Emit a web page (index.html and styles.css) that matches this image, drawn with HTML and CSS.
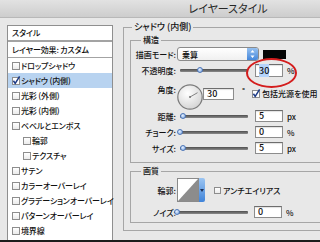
FILE: index.html
```html
<!DOCTYPE html>
<html lang="ja">
<head>
    <meta charset="UTF-8">
    <meta name="viewport" content="width=device-width, initial-scale=1.0">
    <title>レイヤースタイル</title>
    <link rel="stylesheet" href="styles.css">
</head>
<body>
    <div class="window">
        <div class="titlebar">レイヤースタイル</div>

        <div class="dialog">
            <!-- Effect list -->
            <div class="styles-list">
                <div class="list-head">スタイル</div>
                <div class="list-head">レイヤー効果: カスタム</div>
                <ul class="effects">
                    <li><span class="box"></span>ドロップシャドウ</li>
                    <li class="selected">
                        <svg class="box-checked" width="8" height="8" viewBox="0 0 8 8"><rect x=".5" y=".5" width="7" height="7" fill="#fff" stroke="#8d8d8d"/><path d="M1.4 3.8 L3.2 6.4 L7.6 -0.6" fill="none" stroke="#1d3b86" stroke-width="1.5"/></svg>シャドウ (内側)
                    </li>
                    <li><span class="box"></span>光彩 (外側)</li>
                    <li><span class="box"></span>光彩 (内側)</li>
                    <li><span class="box"></span>ベベルとエンボス</li>
                    <li class="sub"><span class="box"></span>輪郭</li>
                    <li class="sub"><span class="box"></span>テクスチャ</li>
                    <li><span class="box"></span>サテン</li>
                    <li><span class="box"></span>カラーオーバーレイ</li>
                    <li><span class="box"></span>グラデーションオーバーレイ</li>
                    <li><span class="box"></span>パターンオーバーレイ</li>
                    <li><span class="box"></span>境界線</li>
                </ul>
            </div>

            <!-- Settings -->
            <div class="settings">
                <fieldset class="group">
                    <legend>シャドウ (内側)</legend>

                    <fieldset class="group inner">
                        <legend>構造</legend>

                        <div class="row row-mode">
                            <span class="label">描画モード:</span>
                            <div class="select">
                                乗算
                                <span class="stepper">
                                    <svg width="11" height="14" viewBox="0 0 11 14"><path d="M5.5 3 L7.5 5.5 H3.5 Z M5.5 11 L7.5 8.5 H3.5 Z" fill="#fff"/></svg>
                                </span>
                            </div>
                            <div class="swatch"></div>
                        </div>

                        <div class="row row-opacity">
                            <span class="label">不透明度:</span>
                            <div class="slider"><span class="thumb" style="left: 30%"></span></div>
                            <div class="field marked"><span class="sel">30</span><span class="ring"></span></div>
                            <span class="unit">%</span>
                        </div>

                        <div class="row row-angle">
                            <span class="label">角度:</span>
                            <svg class="dial" width="26" height="26" viewBox="0 0 26 26">
                                <defs>
                                    <radialGradient id="dialFill" cx="40%" cy="35%" r="70%">
                                        <stop offset="0" stop-color="#ffffff"/>
                                        <stop offset="1" stop-color="#d2d2d2"/>
                                    </radialGradient>
                                </defs>
                                <circle cx="13" cy="13" r="12.2" fill="url(#dialFill)" stroke="#7c7c7c" stroke-width="1.2"/>
                                <line x1="13" y1="13" x2="20.5" y2="8.7" stroke="#666" stroke-width=".8"/>
                                <circle cx="13" cy="13" r=".9" fill="#666"/>
                            </svg>
                            <div class="field angle">30</div>
                            <span class="degree">°</span>
                            <svg class="box-checked global" width="8" height="8" viewBox="0 0 8 8"><rect x=".5" y=".5" width="7" height="7" fill="#fff" stroke="#8d8d8d"/><path d="M1.4 3.8 L3.2 6.4 L7.6 -0.6" fill="none" stroke="#1d3b86" stroke-width="1.5"/></svg>
                            <span class="check-text">包括光源を使用</span>
                        </div>

                        <div class="row row-small first">
                            <span class="label">距離:</span>
                            <div class="slider"><span class="thumb" style="left: 5%"></span></div>
                            <div class="field">5</div>
                            <span class="unit">px</span>
                        </div>

                        <div class="row row-small">
                            <span class="label">チョーク:</span>
                            <div class="slider"><span class="thumb" style="left: 0%"></span></div>
                            <div class="field">0</div>
                            <span class="unit">%</span>
                        </div>

                        <div class="row row-small">
                            <span class="label">サイズ:</span>
                            <div class="slider"><span class="thumb" style="left: 5%"></span></div>
                            <div class="field">5</div>
                            <span class="unit">px</span>
                        </div>
                    </fieldset>

                    <fieldset class="group inner quality">
                        <legend>画質</legend>

                        <div class="row row-contour">
                            <span class="label">輪郭:</span>
                            <div class="contour">
                                <svg width="22" height="24" viewBox="0 0 22 24"><rect x=".5" y=".5" width="21" height="23" fill="#fff" stroke="#8a8a8a"/><path d="M1 23 L21 1 V23 Z" fill="#8c8c8c"/></svg>
                                <span class="contour-step">
                                    <svg width="6" height="24" viewBox="0 0 6 24"><path d="M1 11 H5 L3 14 Z" fill="#1d2f55"/></svg>
                                </span>
                            </div>
                            <span class="box antialias"></span>
                            <span class="check-text">アンチエイリアス</span>
                        </div>

                        <div class="row row-small noise">
                            <span class="label">ノイズ:</span>
                            <div class="slider"><span class="thumb" style="left: 0%"></span></div>
                            <div class="field">0</div>
                            <span class="unit">%</span>
                        </div>
                    </fieldset>
                </fieldset>
            </div>
        </div>
    </div>
</body>
</html>
```

FILE: styles.css
```css
body {
    margin: 0;
    background: #1c1c1c;
    font-family: "Noto Sans CJK JP", "Noto Sans", sans-serif;
    font-size: 8px;
    font-weight: 500;
    font-feature-settings: "palt" 1;
    color: #111;
    overflow: hidden;
}

.window {
    width: 456px;
    height: 240px;
    background: #e8e8e8;
    overflow: hidden;
}

.titlebar {
    height: 17px;
    line-height: 16px;
    border-bottom: 1px solid #b8b8b8;
    background: linear-gradient(#e2e2e2, #cdcdcd);
    text-align: center;
    font-size: 11px;
    font-weight: 400;
    color: #262626;
}

.dialog {
    display: flex;
    gap: 10px;
    padding: 4px 0 0 7px;
}

/* left list */
.styles-list {
    flex: none;
    width: 104px;
    height: 230px;
    margin-top: 3px;
    border: 1px solid #8f8f8f;
    background: #fff;
    letter-spacing: -0.15px;
}

.list-head {
    height: 14px;
    line-height: 14px;
    padding-left: 4px;
    border-bottom: 2px solid #a3a3a3;
}

.list-head + .list-head {
    height: 15px;
    line-height: 15px;
    border-bottom: 1px solid #a3a3a3;
}

.effects {
    list-style: none;
    margin: 0;
    padding: 0;
}

.effects li {
    display: flex;
    align-items: center;
    height: 15px;
    padding-left: 4px;
    white-space: nowrap;
}

.effects li.sub {
    padding-left: 15px;
}

.effects li.selected {
    background: #b8d3f0;
}

.box {
    flex: none;
    width: 8px;
    height: 8px;
    box-sizing: border-box;
    border: 1px solid #8d8d8d;
    background: linear-gradient(#fff, #ebebeb);
    margin-right: 1px;
}

.box-checked {
    flex: none;
    overflow: visible;
    margin-right: 1px;
}

/* right settings */
.settings {
    flex: none;
    width: 330px;
}

.group {
    margin: 0;
    padding: 0 0 7px 6px;
    min-width: 0;
    border: 1px solid #a6a6a6;
}

.group legend {
    margin-left: 2px;
    padding: 0 2px;
    line-height: 10px;
    font-size: 9px;
}

.group.inner {
    margin-top: 3px;
    padding: 0 0 8px 0;
}

.group.inner legend {
    margin-left: 10px;
    font-size: 8px;
}

.group.quality {
    padding-bottom: 4px;
}

.row {
    display: flex;
    align-items: center;
    white-space: nowrap;
}

.row .label {
    flex: none;
    width: 45px;
    margin-right: 1px;
    text-align: right;
}

.row-mode {
    height: 14px;
    margin-top: 2px;
}

.select {
    display: flex;
    align-items: center;
    width: 82px;
    height: 14px;
    box-sizing: border-box;
    padding-left: 4px;
    border: 1px solid #8a8a8a;
    border-radius: 3px;
    background: linear-gradient(#fff, #f0f0f0);
    overflow: hidden;
}

.select .stepper {
    display: flex;
    margin-left: auto;
    width: 11px;
    height: 14px;
    margin-top: -1px;
    margin-bottom: -1px;
    background: linear-gradient(#9cc5f2, #3f83d9);
}

.swatch {
    width: 23px;
    height: 9px;
    margin-left: 4px;
    background: #050505;
}

.slider {
    position: relative;
    flex: none;
    width: 68px;
    height: 3px;
    margin: 0 7px 0 3px;
    border-radius: 1px;
    background: linear-gradient(#4e4e4e, #8a8a8a);
}

.thumb {
    position: absolute;
    top: -2px;
    width: 6px;
    height: 6px;
    margin-left: -3px;
    box-sizing: border-box;
    border: 1px solid #4b75b8;
    border-radius: 50%;
    background: radial-gradient(circle at 40% 35%, #e4efff, #7da6de);
}

.field {
    flex: none;
    width: 28px;
    height: 12px;
    box-sizing: border-box;
    padding-left: 3px;
    line-height: 10px;
    font-size: 9px;
    border: 1px solid #8c8c8c;
    border-top-color: #6d6d6d;
    background: #fff;
    box-shadow: inset 0 1px 1px rgba(0, 0, 0, 0.12);
}

.field .sel {
    background: #b5d4fb;
}

.field.marked {
    position: relative;
    height: 13px;
    line-height: 11px;
}

.ring {
    position: absolute;
    left: -10px;
    top: -7px;
    width: 51px;
    height: 30px;
    box-sizing: border-box;
    border: 2px solid #d41d1d;
    border-radius: 50%;
}

.unit {
    margin-left: 4px;
}

.row-opacity {
    height: 13px;
    margin-top: 3px;
}

.row-angle {
    align-items: flex-start;
    height: 26px;
    margin-top: 7px;
}

.dial {
    flex: none;
}

.field.angle {
    width: 31px;
    margin-top: 4px;
}

.degree {
    margin: 1px 0 0 8px;
}

.global {
    margin: 6px 2px 0 7px;
}

.row-angle .check-text {
    margin-top: 4px;
}

.row-small {
    height: 12px;
    margin-top: 4px;
}

.row-small.first {
    margin-top: 0;
}

.row-contour {
    height: 24px;
    margin-top: 2px;
}

.contour {
    display: flex;
    flex: none;
}

.contour-step {
    display: flex;
    width: 6px;
    height: 24px;
    border-radius: 0 2px 2px 0;
    background: linear-gradient(#9cc5f2, #3f83d9);
}

.box.antialias {
    width: 7px;
    height: 7px;
    margin: 0 2px 0 9px;
}

.noise {
    margin-top: 4px;
}

.noise .slider {
    width: 71px;
    margin: 0 6px 0 0;
}
```
